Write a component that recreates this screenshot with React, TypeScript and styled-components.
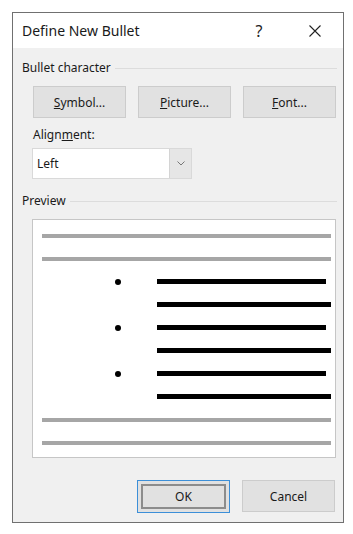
import React from 'react';
import styled, { createGlobalStyle } from 'styled-components';

const GlobalStyle = createGlobalStyle`
  html, body {
    margin: 0;
    padding: 0;
    background: #ffffff;
  }
  body {
    font-family: "Noto Sans", "Open Sans", sans-serif;
    color: #1a1a1a;
  }
`;

const Page = styled.div`
  padding: 12px 0 0 12px;
`;

const Dialog = styled.div`
  width: 330px;
  border: 1px solid #707070;
  background: #f0f0f0;
  box-sizing: content-box;
`;

const TitleBar = styled.div`
  height: 35px;
  background: #ffffff;
  display: flex;
  align-items: center;
  padding-left: 9px;
`;

const Title = styled.span`
  flex: 1;
  font-size: 14px;
  color: #1a1a1a;
`;

const HelpButton = styled.span`
  width: 46px;
  text-align: center;
  font-size: 16px;
  color: #222;
  margin-right: 10px;
`;

const CloseButton = styled.span`
  width: 46px;
  display: flex;
  justify-content: center;
  align-items: center;
  margin-right: 5px;
`;

const Body = styled.div`
  padding: 12px 6px 9px 9px;
  display: flex;
  flex-direction: column;
`;

const GroupHeader = styled.div<{ $top?: number }>`
  display: flex;
  align-items: center;
  gap: 4px;
  font-size: 12px;
  line-height: 16px;
  margin-top: ${p => p.$top ?? 0}px;

  &::after {
    content: '';
    flex: 1;
    height: 1px;
    background: #dcdcdc;
  }
`;

const ButtonRow = styled.div`
  display: grid;
  grid-template-columns: repeat(3, 93px);
  gap: 12px;
  margin: 10px 0 0 11px;
`;

const PushButton = styled.button<{ $default?: boolean }>`
  height: ${p => (p.$default ? 33 : 32)}px;
  box-sizing: border-box;
  background: #e1e1e1;
  border: 1px solid ${p => (p.$default ? '#3c8fd8' : '#cccccc')};
  box-shadow: ${p => (p.$default ? 'inset 0 0 0 3px #e1e1e1, inset 0 0 0 5px #8c8c8c' : 'none')};
  font-family: "Noto Sans", "Open Sans", sans-serif;
  font-size: 12px;
  color: #1a1a1a;
  padding: 0;
  cursor: default;
`;

const FieldLabel = styled.div`
  font-size: 12px;
  line-height: 16px;
  margin: 9px 0 0 11px;
`;

const Select = styled.div`
  margin: 5px 0 0 10px;
  width: 160px;
  height: 31px;
  box-sizing: border-box;
  display: flex;
  background: #ffffff;
  border: 1px solid #d9d9d9;
`;

const SelectValue = styled.span`
  flex: 1;
  display: flex;
  align-items: center;
  padding-left: 4px;
  font-size: 12px;
`;

const SelectArrow = styled.span`
  width: 21px;
  background: #e6e6e6;
  border-left: 1px solid #d4d4d4;
  display: flex;
  align-items: center;
  justify-content: center;
`;

const PreviewBox = styled.div`
  margin: 10px 0 0 10px;
  width: 304px;
  height: 239px;
  box-sizing: border-box;
  background: #ffffff;
  border: 1px solid #c6c6c6;
  padding: 4px 4px 0 9px;
  display: flex;
  flex-direction: column;
`;

const PreviewRow = styled.div`
  height: 23px;
  display: flex;
  align-items: center;
`;

const BulletCell = styled.div`
  width: 115px;
  height: 100%;
  display: flex;
  align-items: center;
  padding-left: 73px;
  box-sizing: border-box;
`;

const Dot = styled.span`
  width: 6px;
  height: 6px;
  border-radius: 50%;
  background: #000;
`;

const Bar = styled.div<{ $width: number; $dark?: boolean }>`
  width: ${p => p.$width}px;
  height: ${p => (p.$dark ? 5 : 4)}px;
  background: ${p => (p.$dark ? '#000000' : '#a6a6a6')};
`;

const Footer = styled.div`
  display: grid;
  grid-template-columns: repeat(2, 93px);
  gap: 12px;
  margin: 22px 0 0 115px;
`;

type Line = { kind: 'gray' } | { kind: 'text'; bullet: boolean; long: boolean };

const lines: Line[] = [
  { kind: 'gray' },
  { kind: 'gray' },
  { kind: 'text', bullet: true, long: false },
  { kind: 'text', bullet: false, long: true },
  { kind: 'text', bullet: true, long: false },
  { kind: 'text', bullet: false, long: true },
  { kind: 'text', bullet: true, long: false },
  { kind: 'text', bullet: false, long: true },
  { kind: 'gray' },
  { kind: 'gray' },
];

export default function App() {
  return (
    <Page>
      <GlobalStyle />
      <Dialog>
        <TitleBar>
          <Title>Define New Bullet</Title>
          <HelpButton>?</HelpButton>
          <CloseButton>
            <svg width="12" height="12" viewBox="0 0 12 12">
              <path d="M0.5 0.5 L11.5 11.5 M11.5 0.5 L0.5 11.5" stroke="#222" strokeWidth="1.1" fill="none" />
            </svg>
          </CloseButton>
        </TitleBar>
        <Body>
          <GroupHeader>Bullet character</GroupHeader>
          <ButtonRow>
            <PushButton><u>S</u>ymbol...</PushButton>
            <PushButton><u>P</u>icture...</PushButton>
            <PushButton><u>F</u>ont...</PushButton>
          </ButtonRow>
          <FieldLabel>Align<u>m</u>ent:</FieldLabel>
          <Select>
            <SelectValue>Left</SelectValue>
            <SelectArrow>
              <svg width="8" height="5" viewBox="0 0 8 5">
                <path d="M0.5 0.5 L4 4 L7.5 0.5" stroke="#777" strokeWidth="1" fill="none" />
              </svg>
            </SelectArrow>
          </Select>
          <GroupHeader $top={14}>Preview</GroupHeader>
          <PreviewBox>
            {lines.map((l, i) =>
              l.kind === 'gray' ? (
                <PreviewRow key={i}>
                  <Bar $width={289} />
                </PreviewRow>
              ) : (
                <PreviewRow key={i}>
                  <BulletCell>{l.bullet && <Dot />}</BulletCell>
                  <Bar $dark $width={l.long ? 174 : 169} />
                </PreviewRow>
              )
            )}
          </PreviewBox>
          <Footer>
            <PushButton $default>OK</PushButton>
            <PushButton>Cancel</PushButton>
          </Footer>
        </Body>
      </Dialog>
    </Page>
  );
}
